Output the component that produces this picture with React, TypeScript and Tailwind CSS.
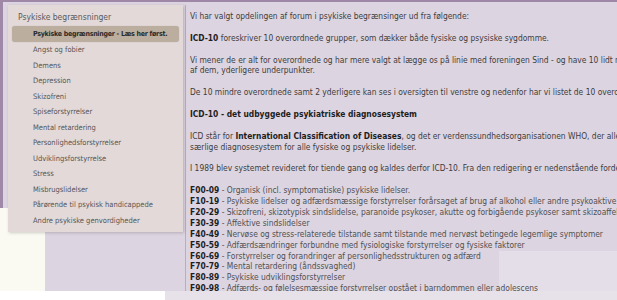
import React from "react";

const menu = [
  "Angst og fobier",
  "Demens",
  "Depression",
  "Skizofreni",
  "Spiseforstyrrelser",
  "Mental retardering",
  "Personlighedsforstyrrelser",
  "Udviklingsforstyrrelse",
  "Stress",
  "Misbrugslidelser",
  "Pårørende til psykisk handicappede",
  "Andre psykiske genvordigheder",
];

const codes: [string, string][] = [
  ["F00-09", "Organisk (incl. symptomatiske) psykiske lidelser."],
  ["F10-19", "Psykiske lidelser og adfærdsmæssige forstyrrelser forårsaget af brug af alkohol eller andre psykoaktive stoffer"],
  ["F20-29", "Skizofreni, skizotypisk sindslidelse, paranoide psykoser, akutte og forbigående psykoser samt skizoaffektive psykoser"],
  ["F30-39", "Affektive sindslidelser"],
  ["F40-49", "Nervøse og stress-relaterede tilstande samt tilstande med nervøst betingede legemlige symptomer"],
  ["F50-59", "Adfærdsændringer forbundne med fysiologiske forstyrrelser og fysiske faktorer"],
  ["F60-69", "Forstyrrelser og forandringer af personlighedsstrukturen og adfærd"],
  ["F70-79", "Mental retardering (åndssvaghed)"],
  ["F80-89", "Psykiske udviklingsforstyrrelser"],
  ["F90-98", "Adfærds- og følelsesmæssige forstyrrelser opstået i barndommen eller adolescens"],
];

const L = "h-[10.9px] leading-[10.9px]";
const G = "mt-[10.9px]";

export default function App() {
  return (
    <div
      className="relative w-[617px] h-[300px] overflow-hidden bg-white"
      style={{ fontFamily: '"DejaVu Sans Condensed", "DejaVu Sans", sans-serif', fontStretch: "condensed" }}
    >
      {/* glitch patches underneath */}
      <div className="absolute left-0 top-[208px] w-[45px] h-[92px] bg-[#faf9f2]" />
      <div className="absolute left-[165px] top-[291px] right-0 h-[9px] bg-[#e7e1ea]" />

      <div className="flex h-[291px]">
        <div className="flex flex-1 h-full bg-[#dcd4e0] border-t-2 border-[#9e87a7]">
          <div className="w-[3px] h-[206px] bg-[#9e87a7] shrink-0" />
          <div className="flex flex-1 pl-[5px] pt-[3px]">
            {/* sidebar */}
            <div className="relative z-10 w-[175px] h-[227px] shrink-0 bg-[#e3d9d9] shadow-[1px_1px_3px_rgba(0,0,0,0.18)] px-[4px] pt-[7px] text-[7.5px] text-[#555] whitespace-nowrap">
              <div className="pl-[6px] h-[11px] leading-[11px] text-[8.5px] text-[#5a5a5a]">Psykiske begrænsninger</div>
              <div className="mt-[3px] h-[16px] leading-[16px] rounded-[3px] bg-[#bbae9f] pl-[21px] font-bold text-[7px] tracking-[-0.25px] text-[#2a2a2a] shadow-[0_0_1px_rgba(0,0,0,0.2)]">
                Psykiske begrænsninger - Læs her først.
              </div>
              <div className="flex flex-col">
                {menu.map((m) => (
                  <div key={m} className="pl-[21px] h-[15.5px] leading-[15.5px] text-[#555]">
                    {m}
                  </div>
                ))}
              </div>
            </div>
            {/* content */}
            <div className="relative flex-1 ml-[2px] h-[286px] border-l border-[#b7afba] overflow-hidden">
              <div className="absolute left-[313px] top-[246px] w-[200px] h-[42px] bg-[#e4dee8]" />
              <div className="relative z-10 pl-[4px] pt-[6px] text-[8.4px] text-[#3c3c3c] whitespace-nowrap">
                <p className={L}>Vi har valgt opdelingen af forum i psykiske begrænsinger ud fra følgende:</p>
                <p className={`${G} ${L}`}><b className="text-[#1e1e1e]">ICD-10</b> foreskriver 10 overordnede grupper, som dækker både fysiske og psysiske sygdomme.</p>
                <p className={`${G} ${L}`}>Vi mener de er alt for overordnede og har mere valgt at lægge os på linie med foreningen Sind - og have 10 lidt mindre overordnede grupper</p>
                <p className={L}>af dem, yderligere underpunkter.</p>
                <p className={`${G} ${L}`}>De 10 mindre overordnede samt 2 yderligere kan ses i oversigten til venstre og nedenfor har vi listet de 10 overordnede grupper fra ICD-10.</p>
                <p className={`${G} ${L} font-bold text-[#1e1e1e]`}>ICD-10 - det udbyggede psykiatriske diagnosesystem</p>
                <p className={`${G} ${L}`}>ICD står for <b className="text-[#1e1e1e]">International Classification of Diseases</b>, og det er verdenssundhedsorganisationen WHO, der allerede har udarbejdet det</p>
                <p className={L}>særlige diagnosesystem for alle fysiske og psykiske lidelser.</p>
                <p className={`${G} ${L}`}>I 1989 blev systemet revideret for tiende gang og kaldes derfor ICD-10. Fra den redigering er nedenstående fordeling hentet.</p>
                <div className={G}>
                  {codes.map(([c, t]) => (
                    <p key={c} className={L}>
                      <b className="text-[#1e1e1e]">{c}</b>
                      <span className="text-[#505050]"> - {t}</span>
                    </p>
                  ))}
                </div>
              </div>
            </div>
          </div>
          <div className="w-[3px] h-[248px] bg-[#9e87a7] shrink-0" />
        </div>
      </div>
      <div className="absolute left-0 top-[291px] w-[165px] h-[9px] bg-white" />
    </div>
  );
}
